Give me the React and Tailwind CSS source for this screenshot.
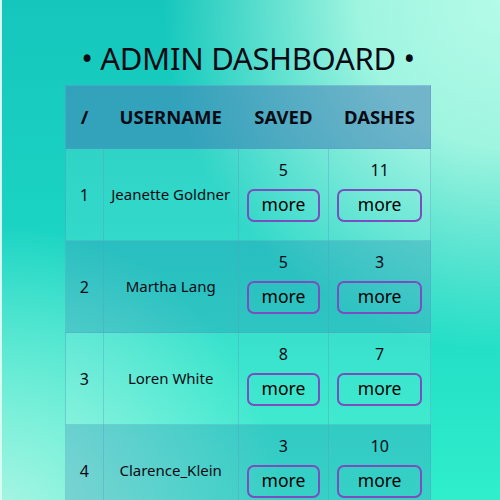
const users = [
  { id: 1, name: 'Jeanette Goldner', saved: 5, dashes: 11 },
  { id: 2, name: 'Martha Lang', saved: 5, dashes: 3 },
  { id: 3, name: 'Loren White', saved: 8, dashes: 7 },
  { id: 4, name: 'Clarence_Klein', saved: 3, dashes: 10 },
]

function StatCell({ value }) {
  return (
    <td className="border border-[#5a9ec0]/40 px-2 align-middle">
      <div className="flex flex-col items-center">
        <div className="text-[16px] leading-5 mt-[-8px]">{value}</div>
        <button className="mt-[9px] w-full h-[33px] rounded-[7px] border-2 border-[#7a4dc0] text-[17.5px] leading-none text-black">
          more
        </button>
      </div>
    </td>
  )
}

export default function App() {
  return (
    <div className="min-h-screen border-l-2 border-[#d8fbf2] bg-[image:radial-gradient(ellipse_at_100%_0%,#b4fbe9_0%,#9ff5e0_20%,transparent_48%),radial-gradient(ellipse_at_0%_100%,#a9f5e3_0%,transparent_40%),linear-gradient(180deg,#15c6bc_0%,#1bd4c3_45%,#30f0cc_100%)] font-['Noto_Sans',sans-serif] text-[#0a0a14]">
      <div className="flex flex-col items-center pt-[38px] pr-[6px]">
        <h1 className="text-[31px] leading-[40px] tracking-[-0.3px]">• ADMIN DASHBOARD •</h1>
        <table className="mt-[7px] w-[366px] border-collapse border border-[#6a8fd0]/50 text-center">
          <thead>
            <tr className="h-[63px] bg-[#4a7fb8]/55 text-[18.5px] font-bold">
              <th className="w-[38px]">/</th>
              <th className="w-[135px]">USERNAME</th>
              <th className="w-[91px]">SAVED</th>
              <th className="w-[102px]">DASHES</th>
            </tr>
          </thead>
          <tbody>
            {users.map((u, i) => (
              <tr key={u.id} className={'h-[92px] ' + (i % 2 === 0 ? 'bg-white/10' : 'bg-[#4a8ab8]/30')}>
                <td className="border border-[#5a9ec0]/40 text-[16px]">{u.id}</td>
                <td className="border border-[#5a9ec0]/40 text-[15px] whitespace-nowrap">{u.name}</td>
                <StatCell value={u.saved} />
                <StatCell value={u.dashes} />
              </tr>
            ))}
          </tbody>
        </table>
      </div>
    </div>
  )
}
